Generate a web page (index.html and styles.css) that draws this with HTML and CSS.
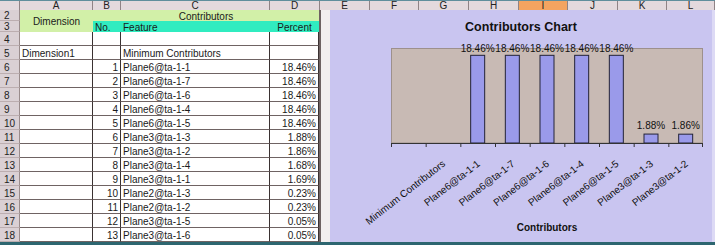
FILE: index.html
```html
<!DOCTYPE html>
<html lang="en">
<head>
    <meta charset="UTF-8">
    <title>contributors</title>
    <link rel="stylesheet" href="styles.css">
</head>
<body>
<div id="sheet">
    <div id="colheads">
        <div class="ch corner"></div>
        <div class="ch">A</div>
        <div class="ch">B</div>
        <div class="ch">C</div>
        <div class="ch">D</div>
        <div class="ch">E</div>
        <div class="ch">F</div>
        <div class="ch">G</div>
        <div class="ch">H</div>
        <div class="ch selected">I</div>
        <div class="ch">J</div>
        <div class="ch">K</div>
        <div class="ch">L</div>
    </div>
    <div id="main">
        <div id="cells">
            <div class="strip"></div>

            <div class="rh top">2</div>
            <div class="c green dim">Dimension</div>
            <div class="c green contrib">Contributors</div>
            <div class="rh top">3</div>
            <div class="c teal">No.</div>
            <div class="c teal">Feature</div>
            <div class="c teal mid">Percent</div>

            <div class="rh">4</div><div class="c"></div><div class="c"></div><div class="c"></div><div class="c"></div>
            <div class="rh">5</div><div class="c">Dimension1</div><div class="c"></div><div class="c">Minimum Contributors</div><div class="c"></div>
            <div class="rh">6</div><div class="c"></div><div class="c num">1</div><div class="c">Plane6@ta-1-1</div><div class="c num">18.46%</div>
            <div class="rh">7</div><div class="c"></div><div class="c num">2</div><div class="c">Plane6@ta-1-7</div><div class="c num">18.46%</div>
            <div class="rh">8</div><div class="c"></div><div class="c num">3</div><div class="c">Plane6@ta-1-6</div><div class="c num">18.46%</div>
            <div class="rh">9</div><div class="c"></div><div class="c num">4</div><div class="c">Plane6@ta-1-4</div><div class="c num">18.46%</div>
            <div class="rh">10</div><div class="c"></div><div class="c num">5</div><div class="c">Plane6@ta-1-5</div><div class="c num">18.46%</div>
            <div class="rh">11</div><div class="c"></div><div class="c num">6</div><div class="c">Plane3@ta-1-3</div><div class="c num">1.88%</div>
            <div class="rh">12</div><div class="c"></div><div class="c num">7</div><div class="c">Plane3@ta-1-2</div><div class="c num">1.86%</div>
            <div class="rh">13</div><div class="c"></div><div class="c num">8</div><div class="c">Plane3@ta-1-4</div><div class="c num">1.68%</div>
            <div class="rh">14</div><div class="c"></div><div class="c num">9</div><div class="c">Plane3@ta-1-1</div><div class="c num">1.69%</div>
            <div class="rh">15</div><div class="c"></div><div class="c num">10</div><div class="c">Plane2@ta-1-3</div><div class="c num">0.23%</div>
            <div class="rh">16</div><div class="c"></div><div class="c num">11</div><div class="c">Plane2@ta-1-2</div><div class="c num">0.23%</div>
            <div class="rh">17</div><div class="c"></div><div class="c num">12</div><div class="c">Plane3@ta-1-5</div><div class="c num">0.05%</div>
            <div class="rh">18</div><div class="c"></div><div class="c num">13</div><div class="c">Plane3@ta-1-6</div><div class="c num">0.05%</div>
        </div>
        <div id="chart">
            <svg width="382" height="232" viewBox="0 0 382 232">
                <text class="title" x="191" y="21" text-anchor="middle">Contributors Chart</text>

                <rect class="plot" x="61.5" y="38.5" width="311" height="94.5"/>

                <rect class="bar" x="140.67" y="45.31" width="14" height="87.69"/>
                <rect class="bar" x="175.33" y="45.31" width="14" height="87.69"/>
                <rect class="bar" x="210" y="45.31" width="14" height="87.69"/>
                <rect class="bar" x="244.67" y="45.31" width="14" height="87.69"/>
                <rect class="bar" x="279.33" y="45.31" width="14" height="87.69"/>
                <rect class="bar" x="314" y="124.07" width="14" height="8.93"/>
                <rect class="bar" x="348.67" y="124.17" width="14" height="8.83"/>

                <g class="val" text-anchor="middle">
                    <text x="147.67" y="41.5">18.46%</text>
                    <text x="182.33" y="41.5">18.46%</text>
                    <text x="217" y="41.5">18.46%</text>
                    <text x="251.67" y="41.5">18.46%</text>
                    <text x="286.33" y="41.5">18.46%</text>
                    <text x="321" y="119">1.88%</text>
                    <text x="355.67" y="119">1.86%</text>
                </g>

                <path class="axis" d="M61 133.5H373M61.5 133v4M96.17 133v4M130.83 133v4M165.5 133v4M200.17 133v4M234.83 133v4M269.5 133v4M304.17 133v4M338.83 133v4M372.5 133v4"/>

                <g class="cat" text-anchor="end">
                    <text transform="translate(116 155) rotate(-38)">Minimum Contributors</text>
                    <text transform="translate(150.67 155) rotate(-38)">Plane6@ta-1-1</text>
                    <text transform="translate(185.33 155) rotate(-38)">Plane6@ta-1-7</text>
                    <text transform="translate(220 155) rotate(-38)">Plane6@ta-1-6</text>
                    <text transform="translate(254.67 155) rotate(-38)">Plane6@ta-1-4</text>
                    <text transform="translate(289.33 155) rotate(-38)">Plane6@ta-1-5</text>
                    <text transform="translate(324 155) rotate(-38)">Plane3@ta-1-3</text>
                    <text transform="translate(358.67 155) rotate(-38)">Plane3@ta-1-2</text>
                </g>

                <text class="axtitle" x="217" y="221" text-anchor="middle">Contributors</text>
            </svg>
        </div>
        <div id="edge"></div>
    </div>
</div>
</body>
</html>
```

FILE: styles.css
```css
body {
    margin: 0;
    font-family: "Liberation Sans", Arial, sans-serif;
    font-size: 10px;
    color: #1a1a1a;
}

#sheet {
    width: 715px;
    height: 245px;
    box-sizing: border-box;
    border-top: 1px solid #5f8e9c;
    border-bottom: 3px solid #2d6670;
    overflow: hidden;
}

#colheads {
    display: grid;
    grid-template-columns: 20px 73px 28px 149px 50px 50px 49px 50px 50px 49px 50px 49px 1fr;
    height: 9px;
    background: #e3d9dd;
}

.ch {
    box-sizing: border-box;
    border-right: 1px solid #8f8386;
    border-bottom: 1px solid #a49699;
    text-align: center;
    line-height: 9px;
    color: #222;
}

.ch.selected {
    background: #f4a460;
    border-bottom-color: #c87a3a;
}

#main {
    display: flex;
    height: 232px;
}

#cells {
    display: grid;
    grid-template-columns: 20px 73px 28px 149px 49px 11px;
    grid-template-rows: 11px 11px repeat(15, 14px);
    background: #fff;
}

.strip {
    grid-column: 6;
    grid-row: 1 / -1;
    background: #f3efef;
    border-left: 2px solid #6e6262;
}

.rh {
    box-sizing: border-box;
    background: #dad0d4;
    border-right: 1px solid #9a8c8c;
    border-bottom: 1px solid #bcaeb0;
    padding: 1px 0 0 4px;
    line-height: 14px;
    color: #222;
}

.rh.top {
    padding-top: 0;
    line-height: 12px;
}

.c {
    box-sizing: border-box;
    border-right: 1px solid #3a3232;
    border-bottom: 1px solid #6f6363;
    padding: 1px 2px 0;
    line-height: 14px;
    white-space: nowrap;
    overflow: hidden;
}

.c.num {
    text-align: right;
}

.c.mid {
    text-align: center;
}

.green {
    background: #d2f0a8;
    border: none;
}

.dim {
    grid-row: span 2;
    text-align: center;
    line-height: 21px;
}

.contrib {
    grid-column: span 3;
    text-align: center;
    line-height: 11px;
}

.teal {
    background: #30ecc0;
    border: none;
    line-height: 11px;
}

#chart {
    width: 382px;
    background: #c9c5f0;
}

#chart svg {
    display: block;
    font-family: "Liberation Sans", Arial, sans-serif;
}

.title {
    font-size: 12.5px;
    font-weight: bold;
    fill: #111;
}

.plot {
    fill: #c8bab4;
    stroke: #9d908c;
    stroke-width: 1;
}

.bar {
    fill: #9a9aea;
    stroke: #222238;
    stroke-width: 1;
}

.val text {
    font-size: 10px;
    fill: #111;
}

.axis {
    fill: none;
    stroke: #333;
    stroke-width: 1;
}

.cat text {
    font-size: 10px;
    fill: #111;
}

.axtitle {
    font-size: 10px;
    font-weight: bold;
    fill: #111;
}

#edge {
    flex: 1;
    background: #dddaf5;
}
```
